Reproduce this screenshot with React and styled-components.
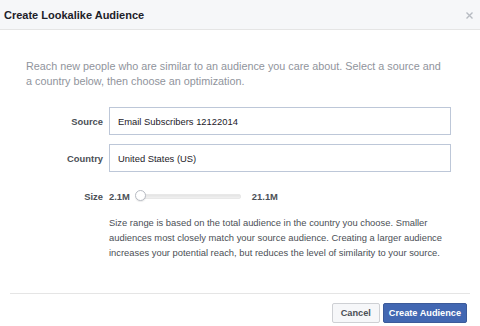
import React from "react";
import styled, { createGlobalStyle } from "styled-components";

const Global = createGlobalStyle`
  html, body { margin: 0; padding: 0; background: #fff; }
  body { font-family: "Liberation Sans", Arial, sans-serif; }
`;

const Dialog = styled.div`
  width: 480px;
  height: 326px;
  background: #fff;
  display: flex;
  flex-direction: column;
  box-sizing: border-box;
`;

const Header = styled.div`
  height: 29px;
  background: #f6f7f9;
  border-bottom: 1px solid #e5e5e5;
  display: flex;
  align-items: center;
  justify-content: space-between;
  padding: 0 7px 0 4px;
  flex-shrink: 0;
`;

const Title = styled.div`
  font-size: 11px;
  font-weight: bold;
  color: #1d2129;
`;

const Close = styled.div`
  width: 7px;
  height: 7px;
  display: flex;
  margin-top: 1px;
`;

const Body = styled.div`
  flex: 1;
  padding: 29px 29px 0 26px;
  display: flex;
  flex-direction: column;
`;

const Intro = styled.p`
  margin: 0 4px 0 0;
  font-size: 10.8px;
  line-height: 15px;
  color: #90949c;
`;

const Form = styled.div`
  display: grid;
  grid-template-columns: 77px 1fr;
  column-gap: 6px;
  row-gap: 9px;
  margin-top: 18px;
  align-items: center;
`;

const Label = styled.div`
  font-size: 9.4px;
  font-weight: bold;
  color: #4b4f56;
  text-align: right;
  margin-top: ${(p) => p.$mt || 0}px;
`;

const Field = styled.div`
  height: 28px;
  box-sizing: border-box;
  border: 1px solid #bdc7d8;
  display: flex;
  align-items: center;
  padding-left: 8px;
  font-size: 9.4px;
  color: #1d2129;
`;

const SizeRow = styled.div`
  display: flex;
  align-items: center;
  height: 14px;
  margin-top: 8px;
`;

const Value = styled.span`
  font-size: 9.4px;
  font-weight: bold;
  color: #4b4f56;
  margin-left: ${(p) => p.$ml || 0}px;
`;

const Slider = styled.div`
  position: relative;
  width: 106px;
  height: 12px;
  margin-left: 5px;
  display: flex;
  align-items: center;
`;

const Track = styled.div`
  flex: 1;
  height: 3px;
  margin-left: 6px;
  border-radius: 2px;
  background: linear-gradient(#e4e4e4, #f0f0f0);
  border: 1px solid #e8e8e8;
`;

const Thumb = styled.div`
  position: absolute;
  left: 0;
  top: 0;
  width: 11px;
  height: 11px;
  border-radius: 50%;
  background: #fff;
  border: 1px solid #b8bcc4;
  box-sizing: border-box;
  box-shadow: 0 1px 1px rgba(0,0,0,0.08);
`;

const Help = styled.p`
  margin: 3px 0 0 0;
  font-size: 9.4px;
  line-height: 15px;
  color: #4b4f56;
`;

const Footer = styled.div`
  margin: 0 10px;
  border-top: 1px solid #e5e5e5;
  height: 33px;
  display: flex;
  justify-content: flex-end;
  align-items: flex-start;
  padding-top: 9px;
  gap: 3px;
  box-sizing: border-box;
  flex-shrink: 0;
`;

const Button = styled.button`
  height: 20px;
  box-sizing: border-box;
  padding: 0 ${(p) => (p.$primary ? 5 : 8)}px;
  font-family: inherit;
  font-size: 9.2px;
  font-weight: bold;
  border-radius: 2px;
  border: 1px solid ${(p) => (p.$primary ? "#3c5a99" : "#ced0d4")};
  background: ${(p) => (p.$primary ? "#4267b2" : "#f6f7f9")};
  color: ${(p) => (p.$primary ? "#fff" : "#4b4f56")};
  display: flex;
  align-items: center;
  margin-right: ${(p) => (p.$primary ? 3 : 0)}px;
`;

export default function App() {
  return (
    <>
      <Global />
      <Dialog>
        <Header>
          <Title>Create Lookalike Audience</Title>
          <Close>
            <svg width="7" height="7" viewBox="0 0 7 7">
              <path d="M0.5 0.5L6.5 6.5M6.5 0.5L0.5 6.5" stroke="#b7bbc2" strokeWidth="1.4" />
            </svg>
          </Close>
        </Header>
        <Body>
          <Intro>
            Reach new people who are similar to an audience you care about. Select a source and a country below, then choose an optimization.
          </Intro>
          <Form>
            <Label>Source</Label>
            <Field>Email Subscribers 12122014</Field>
            <Label>Country</Label>
            <Field>United States (US)</Field>
            <Label $mt={8}>Size</Label>
            <SizeRow>
              <Value>2.1M</Value>
              <Slider>
                <Track />
                <Thumb />
              </Slider>
              <Value $ml={11}>21.1M</Value>
            </SizeRow>
            <div />
            <Help>
              Size range is based on the total audience in the country you choose. Smaller audiences most closely match your source audience. Creating a larger audience increases your potential reach, but reduces the level of similarity to your source.
            </Help>
          </Form>
        </Body>
        <Footer>
          <Button>Cancel</Button>
          <Button $primary>Create Audience</Button>
        </Footer>
      </Dialog>
    </>
  );
}
